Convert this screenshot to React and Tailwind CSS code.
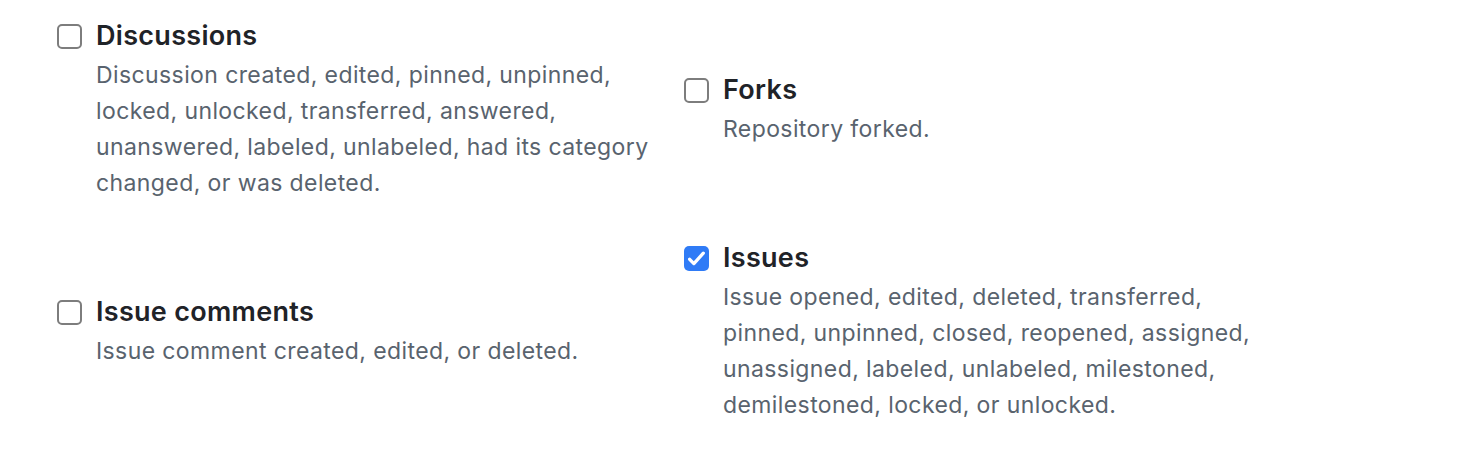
import React, { useState } from 'react';

const events = [
  {
    id: 'discussions',
    title: 'Discussions',
    description:
      'Discussion created, edited, pinned, unpinned, locked, unlocked, transferred, answered, unanswered, labeled, unlabeled, had its category changed, or was deleted.',
  },
  { id: 'forks', title: 'Forks', description: 'Repository forked.' },
  {
    id: 'issue_comments',
    title: 'Issue comments',
    description: 'Issue comment created, edited, or deleted.',
  },
  {
    id: 'issues',
    title: 'Issues',
    description:
      'Issue opened, edited, deleted, transferred, pinned, unpinned, closed, reopened, assigned, unassigned, labeled, unlabeled, milestoned, demilestoned, locked, or unlocked.',
    checked: true,
  },
];

function Checkbox({ checked, onChange }) {
  return (
    <button
      type="button"
      onClick={onChange}
      className={
        checked
          ? 'mt-[6px] w-[25px] h-[25px] shrink-0 rounded-[5px] bg-[#2f7bf6] flex items-center justify-center'
          : 'mt-[6px] w-[25px] h-[25px] shrink-0 rounded-[5px] border-2 border-[#7d7d7d] bg-white'
      }
    >
      {checked && (
        <svg width="21" height="21" viewBox="0 0 16 16" fill="none">
          <path d="M2.8 8.6l3.2 3.3L13.2 3.9" stroke="white" strokeWidth="2.5" strokeLinecap="round" strokeLinejoin="round" />
        </svg>
      )}
    </button>
  );
}

export default function App() {
  const [state, setState] = useState(
    Object.fromEntries(events.map((e) => [e.id, !!e.checked]))
  );

  return (
    <div
      className="bg-white min-h-[452px] pt-[18px] pl-[57px]"
      style={{ fontFamily: 'Inter, "Noto Sans", sans-serif' }}
    >
      <div className="grid grid-cols-[596px_596px] gap-x-[31px] gap-y-[39px] items-center">
        {events.map((e) => (
          <label key={e.id} className="flex gap-[14px] items-start">
            <Checkbox
              checked={state[e.id]}
              onChange={() => setState((s) => ({ ...s, [e.id]: !s[e.id] }))}
            />
            <div className="w-[556px]">
              <div className="text-[27px] leading-[36px] tracking-[0.3px] font-semibold text-[#1f2328]">{e.title}</div>
              <p className="mt-[3px] text-[23px] leading-[36px] tracking-[0.4px] text-[#59636e]">{e.description}</p>
            </div>
          </label>
        ))}
      </div>
    </div>
  );
}
